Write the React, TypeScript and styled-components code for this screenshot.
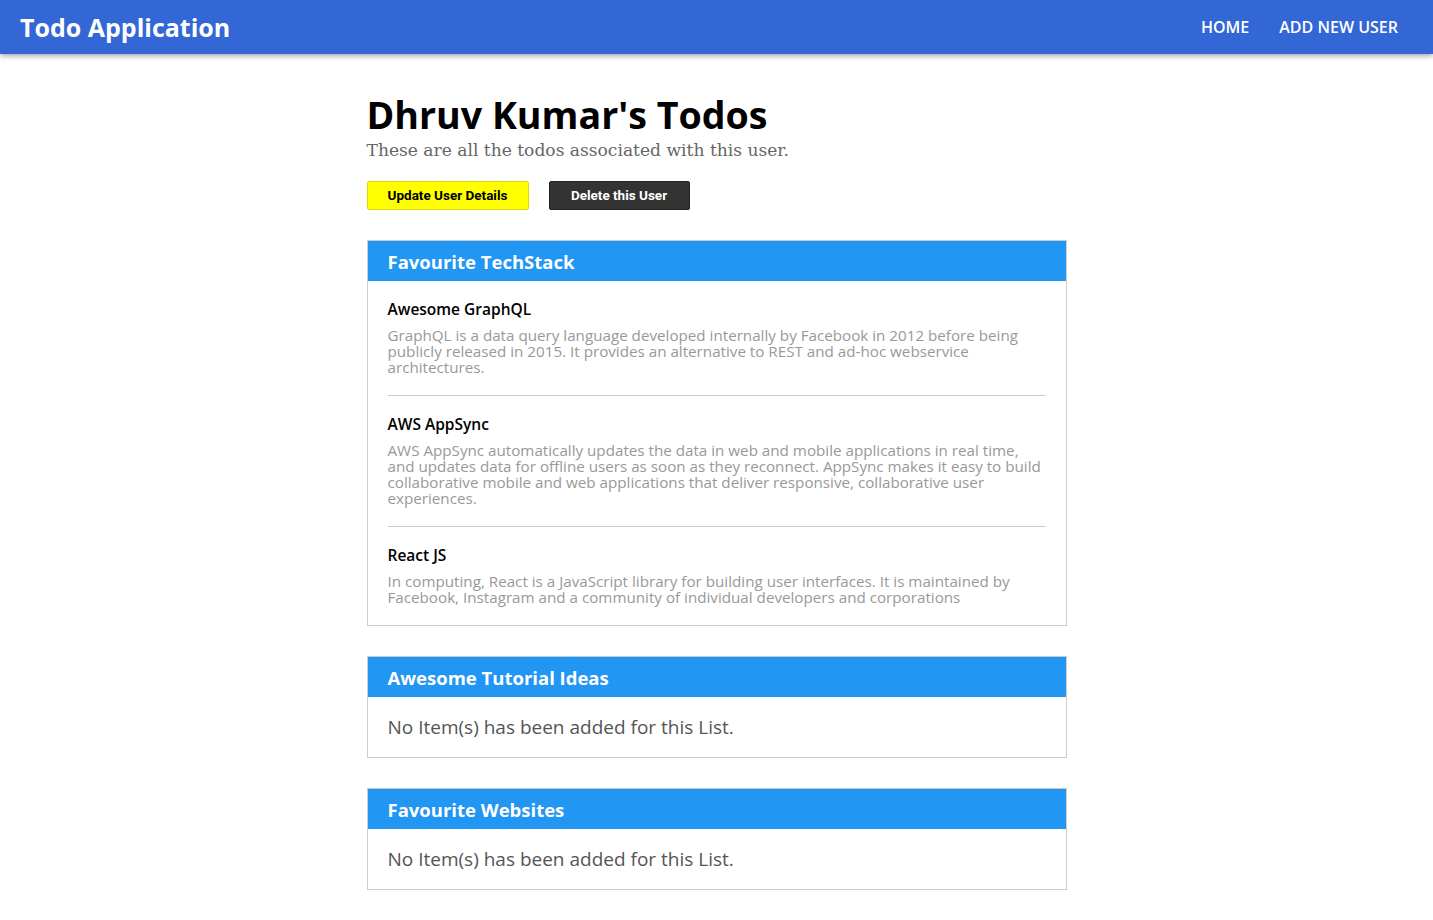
import React from "react";
import styled, { createGlobalStyle } from "styled-components";

const GlobalStyle = createGlobalStyle`
  html, body { margin: 0; padding: 0; background: #fff; }
  body { font-family: "Open Sans", "Noto Sans", sans-serif; color: #000; }
  * { box-sizing: border-box; }
`;

const NavBar = styled.header`
  height: 54px;
  background: #3367d6;
  box-shadow: 0 2px 5px rgba(0, 0, 0, 0.35);
  display: flex;
  align-items: center;
  justify-content: space-between;
  padding: 0 35px 0 20px;
`;

const Brand = styled.a`
  color: #fff;
  font-weight: 700;
  font-size: 25px;
  text-decoration: none;
`;

const NavLinks = styled.nav`
  display: flex;
  gap: 30px;
`;

const NavLink = styled.a`
  color: #fff;
  font-weight: 600;
  font-size: 16px;
  text-transform: uppercase;
  text-decoration: none;
`;

const Main = styled.main`
  width: 700px;
  margin: 0 auto;
  padding: 39px 0 40px;
`;

const Title = styled.h1`
  margin: 0;
  font-size: 37.6px;
  line-height: 44px;
  font-weight: 700;
  color: #000;
`;

const Subtitle = styled.p`
  margin: 1px 0 0;
  font-family: "DejaVu Serif", "Liberation Serif", serif;
  font-size: 17.1px;
  line-height: 24px;
  color: #666;
`;

const Actions = styled.div`
  display: flex;
  gap: 20px;
  margin-top: 19px;
`;

const Button = styled.button<{ $variant: "yellow" | "dark" }>`
  height: 29px;
  padding: 0 0 1px;
  width: ${(p) => (p.$variant === "yellow" ? "162px" : "141px")};
  font-family: Roboto, "Liberation Sans", sans-serif;
  font-weight: 700;
  font-size: 13.5px;
  border-radius: 2px;
  cursor: pointer;
  background: ${(p) => (p.$variant === "yellow" ? "#ffff00" : "#333333")};
  color: ${(p) => (p.$variant === "yellow" ? "#000" : "#fff")};
  border: 1px solid ${(p) => (p.$variant === "yellow" ? "#e0d800" : "#222")};
`;

const Lists = styled.div`
  display: flex;
  flex-direction: column;
  gap: 30px;
  margin-top: 30px;
`;

const Card = styled.section`
  border: 1px solid #ccc;
`;

const CardHeader = styled.h2`
  margin: 0;
  height: 40px;
  display: flex;
  align-items: center;
  padding: 0 20px;
  background: #2196f3;
  color: #fff;
  font-size: 18.5px;
  font-weight: 700;
`;

const CardBody = styled.div`
  padding: 0 20px;
`;

const Item = styled.div`
  padding: 18px 0 20px;
  & + & {
    border-top: 1px solid #ccc;
  }
`;

const ItemTitle = styled.h3`
  margin: 0;
  font-size: 15.5px;
  line-height: 20px;
  font-weight: 600;
  color: #000;
`;

const ItemText = styled.p`
  margin: 8px 0 0;
  font-size: 15.2px;
  line-height: 16px;
  color: #999;
`;

const Empty = styled.p`
  margin: 0;
  padding: 20px 0;
  font-size: 19px;
  line-height: 20px;
  color: #555;
`;

type Todo = { title: string; text: string };
type List = { name: string; items: Todo[] };

const lists: List[] = [
  {
    name: "Favourite TechStack",
    items: [
      {
        title: "Awesome GraphQL",
        text: "GraphQL is a data query language developed internally by Facebook in 2012 before being publicly released in 2015. It provides an alternative to REST and ad-hoc webservice architectures.",
      },
      {
        title: "AWS AppSync",
        text: "AWS AppSync automatically updates the data in web and mobile applications in real time, and updates data for offline users as soon as they reconnect. AppSync makes it easy to build collaborative mobile and web applications that deliver responsive, collaborative user experiences.",
      },
      {
        title: "React JS",
        text: "In computing, React is a JavaScript library for building user interfaces. It is maintained by Facebook, Instagram and a community of individual developers and corporations",
      },
    ],
  },
  { name: "Awesome Tutorial Ideas", items: [] },
  { name: "Favourite Websites", items: [] },
];

export default function App() {
  return (
    <>
      <GlobalStyle />
      <NavBar>
        <Brand href="#">Todo Application</Brand>
        <NavLinks>
          <NavLink href="#">Home</NavLink>
          <NavLink href="#">Add New User</NavLink>
        </NavLinks>
      </NavBar>
      <Main>
        <Title>Dhruv Kumar's Todos</Title>
        <Subtitle>These are all the todos associated with this user.</Subtitle>
        <Actions>
          <Button $variant="yellow">Update User Details</Button>
          <Button $variant="dark">Delete this User</Button>
        </Actions>
        <Lists>
          {lists.map((l) => (
            <Card key={l.name}>
              <CardHeader>{l.name}</CardHeader>
              <CardBody>
                {l.items.length === 0 ? (
                  <Empty>No Item(s) has been added for this List.</Empty>
                ) : (
                  l.items.map((it) => (
                    <Item key={it.title}>
                      <ItemTitle>{it.title}</ItemTitle>
                      <ItemText>{it.text}</ItemText>
                    </Item>
                  ))
                )}
              </CardBody>
            </Card>
          ))}
        </Lists>
      </Main>
    </>
  );
}
